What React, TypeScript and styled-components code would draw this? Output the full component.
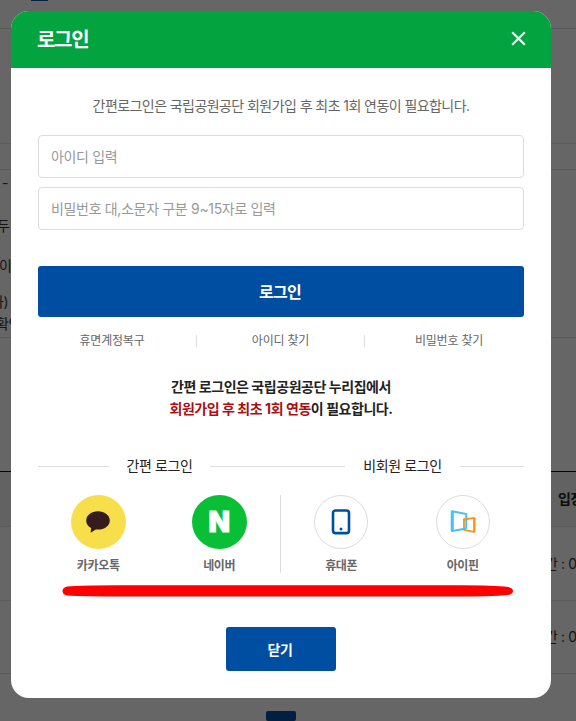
import React from "react";
import styled, { createGlobalStyle } from "styled-components";

const GlobalStyle = createGlobalStyle`
  * { box-sizing: border-box; }
  body {
    margin: 0;
    overflow: hidden;
    background: #fff;
    font-family: Inter, "Noto Sans CJK KR", sans-serif;
  }
  button, input { font-family: inherit; }
`;

const Stage = styled.div`
  position: relative;
  width: 576px;
  height: 721px;
  overflow: hidden;
`;

const Page = styled.div`
  display: flex;
  flex-direction: column;
  height: 721px;
  color: #333;
  font-size: 14px;
  letter-spacing: -0.4px;
`;

const Band = styled.div<{ $h: number; $line?: string; $bg?: string }>`
  display: flex;
  flex: none;
  height: ${(p) => p.$h}px;
  background: ${(p) => p.$bg ?? "transparent"};
  border-bottom: 1px solid ${(p) => p.$line ?? "#e4e4e4"};
`;

const Tab = styled.div`
  width: 17px;
  height: 1px;
  margin-left: 31px;
  background: #004ea2;
`;

const Notes = styled.div`
  display: flex;
  flex-direction: column;
  width: 20px;
  padding-top: 2px;
`;

const Note = styled.div<{ $h: number; $shift: number }>`
  height: ${(p) => p.$h}px;
  line-height: 22px;
  margin-left: ${(p) => p.$shift}px;
  white-space: nowrap;
`;

const Cell = styled.div<{ $bold?: boolean; $start: number }>`
  display: flex;
  align-items: center;
  padding-bottom: 2px;
  margin-left: ${(p) => p.$start}px;
  white-space: nowrap;
  color: ${(p) => (p.$bold ? "#222" : "#333")};
  font-weight: ${(p) => (p.$bold ? 700 : 400)};
`;

const Pager = styled.div`
  align-self: flex-start;
  width: 30px;
  height: 30px;
  margin: 37px 0 0 266px;
  border-radius: 2px;
  background: #004ea2;
`;

const Overlay = styled.div`
  position: absolute;
  inset: 0;
  padding: 11px;
  background: rgba(0, 0, 0, 0.6);
`;

const Dialog = styled.section`
  width: 540px;
  height: 687px;
  border-radius: 18px;
  background: #fff;
  overflow: hidden;
`;

const Header = styled.header`
  display: flex;
  align-items: center;
  justify-content: space-between;
  height: 57px;
  padding: 0 25px 2px 26px;
  background: #03a33f;
`;

const Title = styled.h1`
  margin: 0;
  padding-top: 2px;
  color: #fff;
  font-size: 20px;
  font-weight: 700;
  line-height: 30px;
  letter-spacing: -1.3px;
`;

const IconButton = styled.button`
  display: flex;
  padding: 0;
  border: 0;
  background: none;
`;

const Body = styled.div`
  display: flex;
  flex-direction: column;
  padding: 28px 27px 0;
`;

const Intro = styled.p`
  margin: 0 0 19px;
  height: 20px;
  color: #666;
  font-size: 14px;
  line-height: 20px;
  letter-spacing: -0.57px;
  text-align: center;
  white-space: nowrap;
`;

const Field = styled.input`
  height: 43px;
  margin-bottom: 9px;
  padding: 0 12px;
  border: 1px solid #dcdcdc;
  border-radius: 4px;
  outline: 0;
  font-size: 14px;
  letter-spacing: -0.33px;
  &::placeholder { color: #999; opacity: 1; }
`;

const Submit = styled.button`
  height: 51px;
  margin-top: 27px;
  padding: 0 2px 2px 0;
  border: 0;
  border-radius: 3px;
  background: #004ea2;
  color: #fff;
  font-size: 16px;
  font-weight: 700;
  letter-spacing: -0.7px;
`;

const Links = styled.nav`
  display: grid;
  grid-template-columns: 159px 168px 159px;
  align-items: center;
  height: 12px;
  margin-top: 18px;
`;

const Link = styled.a`
  height: 12px;
  border-right: 1px solid #ddd;
  color: #666;
  font-size: 12px;
  line-height: 11px;
  letter-spacing: -0.2px;
  text-align: center;
  &:first-child { padding-right: 10px; }
  &:last-child { padding-left: 9px; border-right: 0; }
`;

const Notice = styled.p`
  margin: 29px 0 0;
  height: 44px;
  color: #222;
  font-size: 14px;
  font-weight: 700;
  line-height: 22px;
  letter-spacing: -0.45px;
  text-align: center;
`;

const Accent = styled.strong`
  color: #a90f14;
  font-weight: 700;
`;

const Groups = styled.div`
  display: grid;
  grid-template-columns: 1fr 1fr;
  margin-top: 36px;
`;

const Group = styled.section`
  display: flex;
  flex-direction: column;
`;

const Heading = styled.h2`
  display: flex;
  align-items: center;
  gap: 18px;
  height: 20px;
  margin: 0;
  color: #222;
  font-size: 14px;
  font-weight: 400;
  letter-spacing: -0.42px;
  white-space: nowrap;
  &::before, &::after {
    content: "";
    flex: 1;
    height: 1px;
    background: #ddd;
  }
`;

const HeadingText = styled.span`
  padding-bottom: 2px;
`;

const Options = styled.div<{ $divided?: boolean }>`
  display: grid;
  grid-template-columns: 120.5px 1fr;
  height: 78px;
  margin-top: 19px;
  border-right: ${(p) => (p.$divided ? "1px solid #ddd" : "0")};
`;

const Option = styled.div`
  display: flex;
  flex-direction: column;
  align-items: center;
  gap: 8px;
  color: #666;
  font-size: 12px;
  font-weight: 700;
  line-height: 18px;
  letter-spacing: -0.3px;
`;

const Disc = styled.div<{ $bg?: string }>`
  display: flex;
  align-items: center;
  justify-content: center;
  width: ${(p) => (p.$bg ? 55 : 54)}px;
  height: 54px;
  border: ${(p) => (p.$bg ? "0" : "1px solid #dcdcdc")};
  border-radius: 50%;
  background: ${(p) => p.$bg ?? "#fff"};
`;

const NaverMark = styled.span`
  color: #fff;
  font: 900 28px/54px Inter, sans-serif;
  letter-spacing: 0;
  -webkit-text-stroke: 0.8px #fff;
`;

const Underline = styled.svg`
  display: block;
  width: 452px;
  height: 12px;
  margin: 12px 0 0 24px;
`;

const CloseButton = styled.button`
  align-self: center;
  width: 110px;
  height: 44px;
  margin-top: 30px;
  padding: 0 2px 1px 0;
  border: 0;
  border-radius: 3px;
  background: #004ea2;
  color: #fff;
  font-size: 14px;
  font-weight: 700;
  letter-spacing: -0.5px;
`;

function BackgroundPage() {
  return (
    <Page>
      <Band $h={29}><Tab /></Band>
      <Band $h={115} />
      <Band $h={26} />
      <Band $h={168}>
        <Notes>
          <Note $h={43} $shift={2}>-</Note>
          <Note $h={40} $shift={-3}>두</Note>
          <Note $h={36} $shift={-1}>이</Note>
          <Note $h={22} $shift={-9}>나)</Note>
          <Note $h={22} $shift={-4}>확인</Note>
        </Notes>
      </Band>
      <Band $h={134} $line="#111" />
      <Band $h={55} $bg="#f5f5f5"><Cell $bold $start={558}>입장</Cell></Band>
      <Band $h={74}><Cell $start={545}>간 : 09:00</Cell></Band>
      <Band $h={73}><Cell $start={545}>간 : 09:00</Cell></Band>
      <Pager />
    </Page>
  );
}

export default function App() {
  return (
    <>
      <GlobalStyle />
      <Stage>
        <BackgroundPage />
        <Overlay>
          <Dialog>
            <Header>
              <Title>로그인</Title>
              <IconButton aria-label="닫기">
                <svg width="15" height="15" viewBox="0 0 15 15" fill="none" stroke="#fff" strokeWidth="2.2">
                  <path d="M1.2 1.2 13.8 13.8M13.8 1.2 1.2 13.8" />
                </svg>
              </IconButton>
            </Header>
            <Body>
              <Intro>간편로그인은 국립공원공단 회원가입 후 최초 1회 연동이 필요합니다.</Intro>
              <Field placeholder="아이디 입력" />
              <Field type="password" placeholder="비밀번호 대,소문자 구분 9~15자로 입력" />
              <Submit>로그인</Submit>
              <Links>
                <Link>휴면계정복구</Link>
                <Link>아이디 찾기</Link>
                <Link>비밀번호 찾기</Link>
              </Links>
              <Notice>
                간편 로그인은 국립공원공단 누리집에서
                <br />
                <Accent>회원가입 후 최초 1회 연동</Accent>이 필요합니다.
              </Notice>
              <Groups>
                <Group>
                  <Heading><HeadingText>간편 로그인</HeadingText></Heading>
                  <Options $divided>
                    <Option>
                      <Disc $bg="#f7df4b">
                        <svg width="26" height="24" viewBox="0 0 26 24" fill="#371c1d">
                          <path d="M13 1.2C6.4 1.2 1.2 5.2 1.2 10.5c0 3.4 2 6.2 4.9 7.6L5.6 22.8l5.2-3.3c.7.1 1.5.1 2.2.1 6.5 0 11.8-4 11.8-9.2S19.5 1.2 13 1.2Z" />
                        </svg>
                      </Disc>
                      카카오톡
                    </Option>
                    <Option>
                      <Disc $bg="#08bf35"><NaverMark>N</NaverMark></Disc>
                      네이버
                    </Option>
                  </Options>
                </Group>
                <Group>
                  <Heading><HeadingText>비회원 로그인</HeadingText></Heading>
                  <Options>
                    <Option>
                      <Disc>
                        <svg width="20" height="26" viewBox="0 0 20 26" fill="none">
                          <rect x="2" y="1.5" width="16" height="22.6" rx="2.6" stroke="#004ea2" strokeWidth="2.6" />
                          <circle cx="10" cy="20" r="1.5" fill="#004ea2" />
                        </svg>
                      </Disc>
                      휴대폰
                    </Option>
                    <Option>
                      <Disc>
                        <svg width="26" height="26" viewBox="0 0 26 26" fill="none" strokeLinejoin="round">
                          <path d="M14 10.5 24.2 8.9V22.8L14 20.9Z" stroke="#f7931e" strokeWidth="1.8" />
                          <path d="M24.5 9V23" stroke="#f7931e" strokeWidth="2" />
                          <path d="M1.9 2.2 16.3 5V18.5Q16.3 19.6 15 19.8L1.9 22Z" stroke="#45c3f3" strokeWidth="2" />
                          <path d="M2.3 2.5V21.5" stroke="#45c3f3" strokeWidth="3" />
                          <path d="M14 12.5V10.5L18 9.9" stroke="#f7931e" strokeWidth="1.8" />
                        </svg>
                      </Disc>
                      아이핀
                    </Option>
                  </Options>
                </Group>
              </Groups>
              <Underline viewBox="0 0 452 12" fill="#f00">
                <path d="M5 1.5Q20 .3 55 .3H400Q432 .3 446 2Q451 3 451 6T446 10Q430 11.5 390 11.5H65Q20 11.5 5 10.5Q.5 9.5 .5 6T5 1.5Z" />
              </Underline>
              <CloseButton>닫기</CloseButton>
            </Body>
          </Dialog>
        </Overlay>
      </Stage>
    </>
  );
}
